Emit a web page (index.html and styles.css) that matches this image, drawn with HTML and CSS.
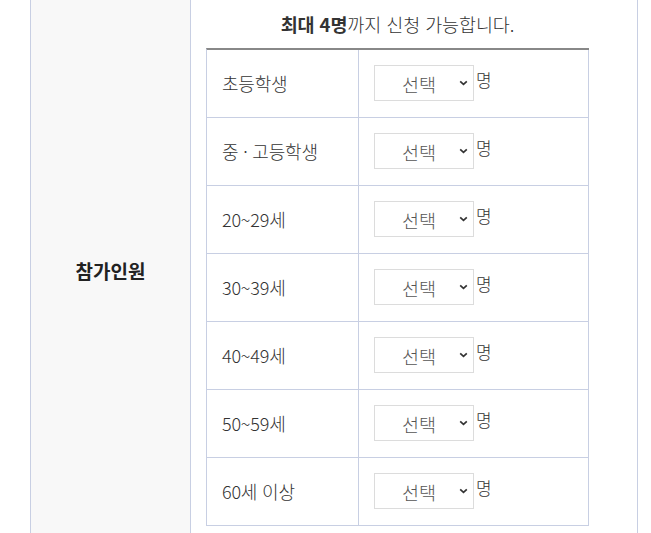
FILE: index.html
```html
<!DOCTYPE html>
<html lang="ko">
<head>
<meta charset="utf-8">
<title>참가인원</title>
<link rel="stylesheet" href="styles.css">
</head>
<body>
<div class="form">
  <div class="label-cell">참가인원</div>
  <div class="content-cell">
    <p class="notice"><strong>최대 4명</strong>까지 신청 가능합니다.</p>
    <div class="people">
      <div class="row"><div class="name">초등학생</div><div class="pick"><span class="sel"><select class="count"><option>선택</option><option>1</option><option>2</option><option>3</option><option>4</option></select><svg class="chev" width="9" height="6" viewBox="0 0 9 6"><path d="M1.2 1.3 L4.5 4.4 L7.8 1.3" fill="none" stroke="#333" stroke-width="1.7"/></svg></span><span class="unit">명</span></div></div>
      <div class="row"><div class="name">중 · 고등학생</div><div class="pick"><span class="sel"><select class="count"><option>선택</option><option>1</option><option>2</option><option>3</option><option>4</option></select><svg class="chev" width="9" height="6" viewBox="0 0 9 6"><path d="M1.2 1.3 L4.5 4.4 L7.8 1.3" fill="none" stroke="#333" stroke-width="1.7"/></svg></span><span class="unit">명</span></div></div>
      <div class="row"><div class="name">20~29세</div><div class="pick"><span class="sel"><select class="count"><option>선택</option><option>1</option><option>2</option><option>3</option><option>4</option></select><svg class="chev" width="9" height="6" viewBox="0 0 9 6"><path d="M1.2 1.3 L4.5 4.4 L7.8 1.3" fill="none" stroke="#333" stroke-width="1.7"/></svg></span><span class="unit">명</span></div></div>
      <div class="row"><div class="name">30~39세</div><div class="pick"><span class="sel"><select class="count"><option>선택</option><option>1</option><option>2</option><option>3</option><option>4</option></select><svg class="chev" width="9" height="6" viewBox="0 0 9 6"><path d="M1.2 1.3 L4.5 4.4 L7.8 1.3" fill="none" stroke="#333" stroke-width="1.7"/></svg></span><span class="unit">명</span></div></div>
      <div class="row"><div class="name">40~49세</div><div class="pick"><span class="sel"><select class="count"><option>선택</option><option>1</option><option>2</option><option>3</option><option>4</option></select><svg class="chev" width="9" height="6" viewBox="0 0 9 6"><path d="M1.2 1.3 L4.5 4.4 L7.8 1.3" fill="none" stroke="#333" stroke-width="1.7"/></svg></span><span class="unit">명</span></div></div>
      <div class="row"><div class="name">50~59세</div><div class="pick"><span class="sel"><select class="count"><option>선택</option><option>1</option><option>2</option><option>3</option><option>4</option></select><svg class="chev" width="9" height="6" viewBox="0 0 9 6"><path d="M1.2 1.3 L4.5 4.4 L7.8 1.3" fill="none" stroke="#333" stroke-width="1.7"/></svg></span><span class="unit">명</span></div></div>
      <div class="row"><div class="name">60세 이상</div><div class="pick"><span class="sel"><select class="count"><option>선택</option><option>1</option><option>2</option><option>3</option><option>4</option></select><svg class="chev" width="9" height="6" viewBox="0 0 9 6"><path d="M1.2 1.3 L4.5 4.4 L7.8 1.3" fill="none" stroke="#333" stroke-width="1.7"/></svg></span><span class="unit">명</span></div></div>
    </div>
  </div>
</div>
</body>
</html>
```
FILE: styles.css
```css
html, body {
  margin: 0;
  padding: 0;
  background: #fff;
  overflow: hidden;
}
body {
  font-family: "Noto Sans CJK KR", "Noto Sans", sans-serif;
  color: #333;
}
.form {
  display: flex;
  margin-left: 30px;
  width: 608px;
  box-sizing: border-box;
  border-left: 1px solid #c8cfe3;
  border-right: 1px solid #c8cfe3;
}
.label-cell {
  width: 160px;
  box-sizing: border-box;
  border-right: 1px solid #c8cfe3;
  background: #f8f8f8;
  display: flex;
  align-items: center;
  justify-content: center;
  font-size: 19px;
  font-weight: 700;
  color: #222;
}
.content-cell {
  flex: 1;
  padding: 0 0 14px 15px;
}
.notice {
  margin: 0;
  width: 383px;
  height: 48px;
  line-height: 48px;
  text-align: center;
  font-size: 18.5px;
  font-weight: 300;
  color: #333;
  letter-spacing: -0.1px;
}
.notice strong {
  font-weight: 700;
}
.people {
  width: 383px;
  box-sizing: border-box;
  border-top: 2px solid #888;
  border-left: 1px solid #c8cfe3;
}
.row {
  display: grid;
  grid-template-columns: 152px 230px;
  height: 68px;
}
.name, .pick {
  box-sizing: border-box;
  border-right: 1px solid #c8cfe3;
  border-bottom: 1px solid #c8cfe3;
  display: flex;
  align-items: center;
  padding-left: 15px;
}
.name {
  font-size: 18px;
  font-weight: 300;
  color: #333;
  letter-spacing: -0.2px;
  padding-bottom: 2px;
}
.pick {
  padding-bottom: 1px;
}
.sel {
  position: relative;
  display: block;
}
.count {
  appearance: none;
  -webkit-appearance: none;
  display: block;
  width: 100px;
  height: 36px;
  box-sizing: border-box;
  border: 1px solid #dcdcdc;
  border-radius: 0;
  background: #fff;
  padding: 2px 0 0 27px;
  margin: 0;
  font-family: "Noto Sans CJK KR", "Noto Sans", sans-serif;
  font-size: 18.5px;
  font-weight: 300;
  color: #555;
  outline: none;
}
.chev {
  position: absolute;
  left: 85px;
  top: 15px;
  pointer-events: none;
}
.unit {
  font-size: 17px;
  font-weight: 300;
  line-height: 20px;
  margin-bottom: 7px;
  margin-left: 2px;
  color: #333;
}
```
